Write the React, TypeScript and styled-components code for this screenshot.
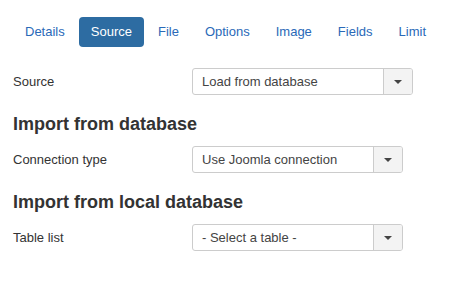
import React from "react";
import styled, { createGlobalStyle } from "styled-components";

const GlobalStyle = createGlobalStyle`
  html, body {
    margin: 0;
    padding: 0;
    background: #fff;
  }
  body {
    font-family: "Liberation Sans", Arial, sans-serif;
    font-size: 13px;
    color: #333;
  }
`;

const tabs = ["Details", "Source", "File", "Options", "Image", "Fields", "Limit"];

const Page = () => {
  return (
    <Container>
      <GlobalStyle />
      <Nav>
        {tabs.map((t) => (
          <Tab key={t} $active={t === "Source"}>
            {t}
          </Tab>
        ))}
      </Nav>
      <Row>
        <Label>Source</Label>
        <Select $width={221} value="Load from database" />
      </Row>
      <Heading>Import from database</Heading>
      <Row>
        <Label>Connection type</Label>
        <Select $width={211} value="Use Joomla connection" />
      </Row>
      <Heading>Import from local database</Heading>
      <Row>
        <Label>Table list</Label>
        <Select $width={211} value="- Select a table -" />
      </Row>
    </Container>
  );
};

const Select = ({ value, $width }: { value: string; $width: number }) => (
  <SelectBox $width={$width}>
    <SelectValue>{value}</SelectValue>
    <CaretBox>
      <Caret />
    </CaretBox>
  </SelectBox>
);

const Container = styled.div`
  padding: 17px 0 0 13px;
`;

const Nav = styled.div`
  display: flex;
  gap: 2px;
  margin-bottom: 21px;
`;

const Tab = styled.div<{ $active?: boolean }>`
  padding: 8px 12px;
  line-height: 14px;
  font-size: 13px;
  border-radius: 4px;
  color: ${(p) => (p.$active ? "#fff" : "#2a69b8")};
  background: ${(p) => (p.$active ? "#2d6ca2" : "transparent")};
  cursor: pointer;
`;

const Row = styled.div`
  display: flex;
  align-items: center;
  height: 27px;
`;

const Label = styled.div`
  width: 179px;
  flex-shrink: 0;
  color: #333;
`;

const Heading = styled.h3`
  font-size: 18px;
  font-weight: bold;
  line-height: 22px;
  margin: 18px 0 11px;
  color: #333;
`;

const SelectBox = styled.div<{ $width: number }>`
  box-sizing: border-box;
  width: ${(p) => p.$width}px;
  height: 27px;
  display: flex;
  border: 1px solid #ccc;
  border-radius: 3px;
  background: #fff;
  overflow: hidden;
`;

const SelectValue = styled.div`
  flex: 1;
  display: flex;
  align-items: center;
  padding-left: 9px;
  color: #444;
  font-size: 13px;
`;

const CaretBox = styled.div`
  width: 28px;
  border-left: 1px solid #ccc;
  background: #f3f3f3;
  display: flex;
  align-items: center;
  justify-content: center;
`;

const Caret = styled.div`
  width: 0;
  height: 0;
  border-left: 4px solid transparent;
  border-right: 4px solid transparent;
  border-top: 4px solid #444;
`;

export default Page;
